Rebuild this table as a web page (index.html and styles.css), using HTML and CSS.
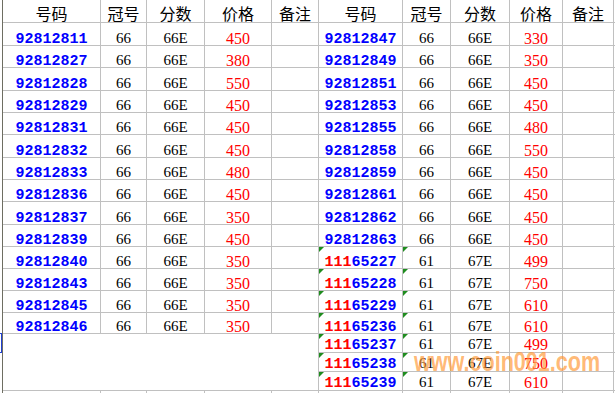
FILE: index.html
```html
<!DOCTYPE html>
<html lang="zh">
<head>
<meta charset="utf-8">
<link rel="stylesheet" href="styles.css">
</head>
<body>
<div class="sheet">
  <div class="rowhead"><div class="sel"></div></div>
  <div class="grid">
    <div class="c h">号码</div><div class="c h">冠号</div><div class="c h">分数</div><div class="c h">价格</div><div class="c h">备注</div>
    <div class="c h">号码</div><div class="c h">冠号</div><div class="c h">分数</div><div class="c h">价格</div><div class="c h">备注</div><div class="c"></div>

    <div class="c n">92812811</div><div class="c k">66</div><div class="c k">66E</div><div class="c p">450</div><div class="c"></div>
    <div class="c n">92812847</div><div class="c k">66</div><div class="c k">66E</div><div class="c p">330</div><div class="c"></div><div class="c"></div>

    <div class="c n">92812827</div><div class="c k">66</div><div class="c k">66E</div><div class="c p">380</div><div class="c"></div>
    <div class="c n">92812849</div><div class="c k">66</div><div class="c k">66E</div><div class="c p">350</div><div class="c"></div><div class="c"></div>

    <div class="c n">92812828</div><div class="c k">66</div><div class="c k">66E</div><div class="c p">550</div><div class="c"></div>
    <div class="c n">92812851</div><div class="c k">66</div><div class="c k">66E</div><div class="c p">450</div><div class="c"></div><div class="c"></div>

    <div class="c n">92812829</div><div class="c k">66</div><div class="c k">66E</div><div class="c p">450</div><div class="c"></div>
    <div class="c n">92812853</div><div class="c k">66</div><div class="c k">66E</div><div class="c p">450</div><div class="c"></div><div class="c"></div>

    <div class="c n">92812831</div><div class="c k">66</div><div class="c k">66E</div><div class="c p">450</div><div class="c"></div>
    <div class="c n">92812855</div><div class="c k">66</div><div class="c k">66E</div><div class="c p">480</div><div class="c"></div><div class="c"></div>

    <div class="c n">92812832</div><div class="c k">66</div><div class="c k">66E</div><div class="c p">450</div><div class="c"></div>
    <div class="c n">92812858</div><div class="c k">66</div><div class="c k">66E</div><div class="c p">550</div><div class="c"></div><div class="c"></div>

    <div class="c n">92812833</div><div class="c k">66</div><div class="c k">66E</div><div class="c p">480</div><div class="c"></div>
    <div class="c n">92812859</div><div class="c k">66</div><div class="c k">66E</div><div class="c p">450</div><div class="c"></div><div class="c"></div>

    <div class="c n">92812836</div><div class="c k">66</div><div class="c k">66E</div><div class="c p">450</div><div class="c"></div>
    <div class="c n">92812861</div><div class="c k">66</div><div class="c k">66E</div><div class="c p">450</div><div class="c"></div><div class="c"></div>

    <div class="c n">92812837</div><div class="c k">66</div><div class="c k">66E</div><div class="c p">350</div><div class="c"></div>
    <div class="c n">92812862</div><div class="c k">66</div><div class="c k">66E</div><div class="c p">450</div><div class="c"></div><div class="c"></div>

    <div class="c n">92812839</div><div class="c k">66</div><div class="c k">66E</div><div class="c p">450</div><div class="c"></div>
    <div class="c n">92812863</div><div class="c k">66</div><div class="c k">66E</div><div class="c p">450</div><div class="c"></div><div class="c"></div>

    <div class="c n">92812840</div><div class="c k">66</div><div class="c k">66E</div><div class="c p">350</div><div class="c"></div>
    <div class="c n t"><span class="v"><span class="r">111</span>65227</span></div><div class="c k t">61</div><div class="c k">67E</div><div class="c p">499</div><div class="c"></div><div class="c"></div>

    <div class="c n">92812843</div><div class="c k">66</div><div class="c k">66E</div><div class="c p">350</div><div class="c"></div>
    <div class="c n t"><span class="v"><span class="r">111</span>65228</span></div><div class="c k t">61</div><div class="c k">67E</div><div class="c p">750</div><div class="c"></div><div class="c"></div>

    <div class="c n">92812845</div><div class="c k">66</div><div class="c k">66E</div><div class="c p">350</div><div class="c"></div>
    <div class="c n t"><span class="v"><span class="r">111</span>65229</span></div><div class="c k t">61</div><div class="c k">67E</div><div class="c p">610</div><div class="c"></div><div class="c"></div>

    <div class="c n">92812846</div><div class="c k">66</div><div class="c k">66E</div><div class="c p">350</div><div class="c"></div>
    <div class="c n t"><span class="v"><span class="r">111</span>65236</span></div><div class="c k t">61</div><div class="c k">67E</div><div class="c p">610</div><div class="c"></div><div class="c"></div>

    <div class="c blank"></div>
    <div class="c n t s"><span class="v"><span class="r">111</span>65237</span></div><div class="c k t s">61</div><div class="c k s">67E</div><div class="c p s">499</div><div class="c"></div><div class="c"></div>
    <div class="c n t s"><span class="v"><span class="r">111</span>65238</span></div><div class="c k t s">61</div><div class="c k s">67E</div><div class="c p s">750</div><div class="c"></div><div class="c"></div>
    <div class="c n t s"><span class="v"><span class="r">111</span>65239</span></div><div class="c k t s">61</div><div class="c k s">67E</div><div class="c p s">610</div><div class="c"></div><div class="c"></div>

    <div class="c"></div><div class="c"></div><div class="c"></div><div class="c"></div><div class="c"></div>
    <div class="c"></div><div class="c"></div><div class="c"></div><div class="c"></div><div class="c"></div><div class="c"></div>
  </div>
  <div class="watermark">www.coin001.com</div>
</div>
</body>
</html>
```

FILE: styles.css
```css
html, body {
  margin: 0;
  padding: 0;
  background: #ffffff;
  overflow: hidden;
}

.sheet {
  position: relative;
  width: 615px;
  height: 393px;
  overflow: hidden;
  display: flex;
}

.rowhead {
  width: 2px;
  flex: none;
  padding-top: 333px;
  background: #ffffff;
}

.sel {
  width: 1px;
  height: 18px;
  border-top: 1px solid #2040d0;
  border-bottom: 1px solid #2040d0;
  border-right: 1px solid #2040d0;
}

.grid {
  flex: none;
  display: grid;
  border-left: 1px solid #6e6e62;
  grid-template-columns: 98px 46px 58px 67px 47px 84px 48px 59px 53px 51px 20px;
  grid-template-rows: 23px 23px 22px 23px 22px 22px 23px 22px 22px 23px 22px 22px 22px 22px 21px 19px 19px 19px 20px;
}

.c {
  position: relative;
  border-right: 1px solid #c0c0c0;
  border-bottom: 1px solid #c0c0c0;
  display: flex;
  align-items: flex-end;
  justify-content: center;
  padding: 0;
  white-space: nowrap;
  overflow: visible;
  color: #000000;
}

.h {
  font-family: "Noto Sans CJK SC", "Noto Sans", sans-serif;
  font-size: 16px;
  line-height: 18px;
}

.n {
  font-family: "Liberation Mono", "DejaVu Sans Mono", monospace;
  color: #0000ff;
  font-weight: bold;
  font-size: 15px;
  line-height: 10px;
}

.v {
  color: #0000ff;
}

.v .r {
  color: #ff0000;
}

.k {
  font-family: "Liberation Serif", "DejaVu Serif", serif;
  font-size: 15px;
  line-height: 14px;
}

.p {
  font-family: "Liberation Serif", "DejaVu Serif", serif;
  color: #ff0000;
  font-size: 16px;
  line-height: 13px;
}

.s {
  padding-bottom: 1px;
}

.t::before {
  content: "";
  position: absolute;
  left: 0;
  top: 0;
  width: 0;
  height: 0;
  border-top: 5px solid #1e8c1e;
  border-right: 5px solid transparent;
}

.blank {
  grid-column: span 5;
  grid-row: span 3;
}

.watermark {
  position: absolute;
  left: 414px;
  top: 347px;
  font-family: "Liberation Sans", Arial, sans-serif;
  font-weight: bold;
  font-size: 28px;
  line-height: 30px;
  transform: scaleX(0.77);
  transform-origin: left top;
  color: rgba(255, 150, 50, 0.68);
  pointer-events: none;
}
```
